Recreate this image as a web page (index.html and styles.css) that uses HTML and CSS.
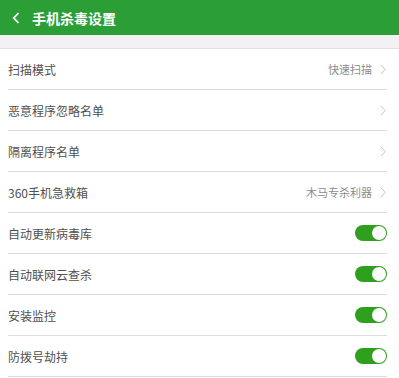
FILE: index.html
```html
<!DOCTYPE html>
<html lang="zh-CN">
<head>
    <meta charset="UTF-8">
    <meta name="viewport" content="width=device-width, initial-scale=1.0">
    <title>手机杀毒设置</title>
    <link rel="stylesheet" href="styles.css">
</head>
<body>
    <div class="topbar">
        <svg class="back" width="8" height="12" viewBox="0 0 8 12"><path d="M6.5 1 L1.8 6 L6.5 11" fill="none" stroke="#fff" stroke-width="1.8"/></svg>
        <span class="title">手机杀毒设置</span>
    </div>
    <div class="gap"></div>

    <ul class="list">
        <li class="row">
            <span class="label">扫描模式</span>
            <span class="value">快速扫描</span>
            <svg class="arrow" width="6" height="11" viewBox="0 0 6 11"><path d="M0.8 0.8 L5.2 5.5 L0.8 10.2" fill="none" stroke="#c4c4c4" stroke-width="1"/></svg>
        </li>
        <li class="row">
            <span class="label">恶意程序忽略名单</span>
            <svg class="arrow" width="6" height="11" viewBox="0 0 6 11"><path d="M0.8 0.8 L5.2 5.5 L0.8 10.2" fill="none" stroke="#c4c4c4" stroke-width="1"/></svg>
        </li>
        <li class="row">
            <span class="label">隔离程序名单</span>
            <svg class="arrow" width="6" height="11" viewBox="0 0 6 11"><path d="M0.8 0.8 L5.2 5.5 L0.8 10.2" fill="none" stroke="#c4c4c4" stroke-width="1"/></svg>
        </li>
        <li class="row">
            <span class="label">360手机急救箱</span>
            <span class="value">木马专杀利器</span>
            <svg class="arrow" width="6" height="11" viewBox="0 0 6 11"><path d="M0.8 0.8 L5.2 5.5 L0.8 10.2" fill="none" stroke="#c4c4c4" stroke-width="1"/></svg>
        </li>
        <li class="row">
            <span class="label">自动更新病毒库</span>
            <span class="switch on"><span class="knob"></span></span>
        </li>
        <li class="row">
            <span class="label">自动联网云查杀</span>
            <span class="switch on"><span class="knob"></span></span>
        </li>
        <li class="row">
            <span class="label">安装监控</span>
            <span class="switch on"><span class="knob"></span></span>
        </li>
        <li class="row">
            <span class="label">防拨号劫持</span>
            <span class="switch on"><span class="knob"></span></span>
        </li>
    </ul>
</body>
</html>
```

FILE: styles.css
```css
body {
    margin: 0;
    background-color: #fff;
    font-family: "Noto Sans CJK SC", "Noto Sans", sans-serif;
    color: #333;
}
.topbar {
    height: 35px;
    background-color: #2b9f36;
    display: flex;
    align-items: center;
    padding-left: 12px;
}
.back {
    margin-right: 12px;
}
.title {
    color: #fff;
    font-size: 14px;
    font-weight: bold;
}
.gap {
    height: 13px;
    background-color: #f2f2f4;
    border-bottom: 1px solid #e2e2e4;
}
.list {
    list-style: none;
    margin: 0;
    padding: 0 12px 0 8px;
}
.row {
    height: 40px;
    border-bottom: 1px solid #dcdcdc;
    display: flex;
    align-items: center;
}
.label {
    font-size: 12px;
    color: #505050;
    flex: 1;
}
.value {
    font-size: 11px;
    color: #8c8c8c;
    margin-right: 8px;
}
.arrow {
    margin-right: 1px;
}
.switch {
    width: 32px;
    height: 16px;
    border-radius: 8px;
    background-color: #2f9f1e;
    display: flex;
    align-items: center;
    justify-content: flex-end;
    padding: 0 1px;
    box-sizing: border-box;
}
.knob {
    width: 14px;
    height: 14px;
    border-radius: 50%;
    background-color: #fff;
}
```
